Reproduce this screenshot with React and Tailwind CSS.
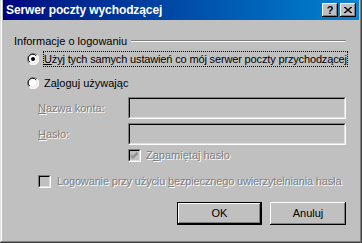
import React from 'react';

const font = { fontFamily: '"Liberation Sans", Arial, sans-serif' };

function Radio({ checked }) {
  return (
    <svg width="12" height="12" viewBox="0 0 12 12" className="shrink-0">
      <circle cx="6" cy="6" r="5.5" fill="#fff" />
      <path d="M10.2 2.2A5.5 5.5 0 1 0 2.2 10.2" stroke="#808080" strokeWidth="1" fill="none" />
      <path d="M9.3 3A4.5 4.5 0 1 0 3 9.3" stroke="#000" strokeWidth="1" fill="none" />
      <path d="M10.2 2.2A5.5 5.5 0 0 1 2.2 10.2" stroke="#fff" strokeWidth="1" fill="none" />
      <path d="M9.3 3A4.5 4.5 0 0 1 3 9.3" stroke="#dfdfdf" strokeWidth="1" fill="none" />
      {checked && <circle cx="6" cy="6" r="2" fill="#000" />}
    </svg>
  );
}

function Sunken({ className = '', children }) {
  return (
    <div className={`border-t border-l border-t-[#808080] border-l-[#808080] border-b border-r border-b-white border-r-white ${className}`}>
      <div className="h-full w-full border-t border-l border-t-black border-l-black border-b border-r border-b-[#dfdfdf] border-r-[#dfdfdf] bg-[#c0c0c0]">
        {children}
      </div>
    </div>
  );
}

function Check({ checked }) {
  return (
    <Sunken className="w-[13px] h-[13px] shrink-0">
      {checked && (
        <svg width="9" height="9" viewBox="0 0 9 9" className="block">
          <path d="M1 3.5L3 5.5L7.5 1M1 4.5L3 6.5L7.5 2M1 5.5L3 7.5L7.5 3" stroke="#808080" fill="none" />
        </svg>
      )}
    </Sunken>
  );
}

function Dis({ children }) {
  return <span className="text-[#808080] [text-shadow:1px_1px_0_#fff]">{children}</span>;
}

function Btn({ children, def }) {
  return (
    <div className={`h-[23px] ${def ? 'w-[85px] border border-black' : 'w-[76px]'}`}>
      <div className="h-full w-full shadow-[inset_-1px_-1px_#000,inset_1px_1px_#fff,inset_-2px_-2px_#808080] bg-[#c0c0c0] flex items-center justify-center text-black">
        {children}
      </div>
    </div>
  );
}

function TitleBtn({ children }) {
  return (
    <div className="w-[16px] h-[14px] bg-[#c0c0c0] shadow-[inset_-1px_-1px_#000,inset_1px_1px_#fff,inset_-2px_-2px_#808080] flex items-center justify-center text-black text-[11px] font-bold leading-none">
      {children}
    </div>
  );
}

export default function App() {
  return (
    <div
      className="w-[362px] h-[243px] bg-[#c0c0c0] text-[11px] leading-none text-black whitespace-nowrap overflow-hidden shadow-[inset_-1px_-1px_#404040,inset_1px_0_#dfdfdf,inset_-2px_-2px_#808080,inset_2px_0_#fff] px-[3px]"
      style={font}
    >
      {/* Title bar */}
      <div className="h-[20px] bg-gradient-to-r from-[#000080] to-[#1084d0] flex items-center pl-[3px] pr-[3px]">
        <span className="text-white font-bold text-[12px] tracking-[-0.1px]">Serwer poczty wychodzącej</span>
        <div className="ml-auto flex gap-[2px]">
          <TitleBtn>?</TitleBtn>
          <TitleBtn>
            <svg width="8" height="7" viewBox="0 0 8 7">
              <path d="M0 0L7 6M1 0L8 6M7 0L0 6M8 0L1 6" stroke="#000" strokeWidth="1" fill="none" />
            </svg>
          </TitleBtn>
        </div>
      </div>

      <div className="pl-[11px] pr-[13px]">
        {/* Group heading */}
        <div className="flex items-center mt-[15px] h-[13px]">
          <span>Informacje o logowaniu</span>
          <div className="flex-1 ml-[4px] border-t border-t-[#808080] border-b border-b-white mt-[-1px]" />
        </div>

        {/* Radios */}
        <div className="flex items-center mt-[3px] ml-[13px] mr-[2px] h-[16px]">
          <Radio checked />
          <span className="ml-[4px] flex-1 h-[16px] flex items-center px-[1px] outline-1 outline-dotted outline-black -outline-offset-1 tracking-[-0.15px]">
            <span><u>U</u>żyj tych samych ustawień co mój serwer poczty przychodzącej</span>
          </span>
        </div>
        <div className="flex items-center mt-[8px] ml-[13px] h-[16px]">
          <Radio />
          <span className="ml-[5px]">Za<u>l</u>oguj używając</span>
        </div>

        {/* Fields */}
        <div className="flex items-center mt-[6px] ml-[24px]">
          <span className="w-[90px]"><Dis><u>N</u>azwa konta:</Dis></span>
          <Sunken className="flex-1 h-[22px]" />
        </div>
        <div className="flex items-center mt-[4px] ml-[24px]">
          <span className="w-[90px]"><Dis><u>H</u>asło:</Dis></span>
          <Sunken className="flex-1 h-[22px]" />
        </div>
        <div className="flex items-center mt-[4px] ml-[114px]">
          <Check checked />
          <span className="ml-[5px]"><Dis>Z<u>a</u>pamiętaj hasło</Dis></span>
        </div>
        <div className="flex items-center mt-[13px] ml-[24px]">
          <Check />
          <span className="ml-[6px] tracking-[-0.15px]"><Dis>Logowanie przy użyciu <u>b</u>ezpiecznego uwierzytelniania hasła</Dis></span>
        </div>

        {/* Buttons */}
        <div className="flex justify-end gap-[8px] mt-[14px]">
          <Btn def>OK</Btn>
          <Btn>Anuluj</Btn>
        </div>
      </div>
    </div>
  );
}
